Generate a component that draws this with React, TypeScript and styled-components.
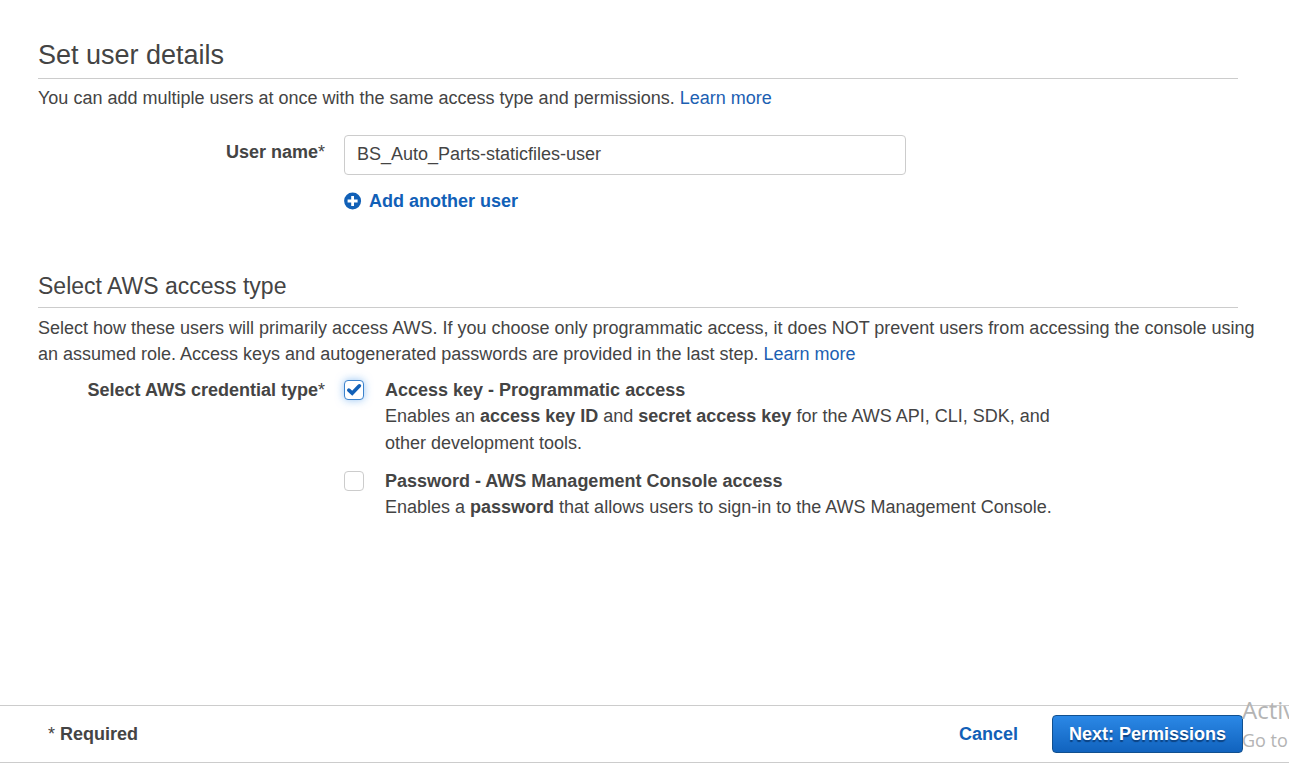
import React, { useState } from "react";
import styled, { createGlobalStyle } from "styled-components";

const GlobalStyle = createGlobalStyle`
  * { box-sizing: border-box; }
  body {
    margin: 0;
    background: #fff;
    color: #444;
    font: 18px/26px "Liberation Sans", Arial, sans-serif;
  }
`;

const Page = styled.div`
  position: relative;
  display: flex;
  flex-direction: column;
  min-height: 100vh;
  overflow: hidden;
`;

const Content = styled.main`
  flex: 1;
  padding: 36px 51px 0 38px;
`;

const Section = styled.section<{ $gap: number }>`
  margin-bottom: ${(p) => p.$gap}px;
`;

const Title = styled.h1`
  margin: 0 0 6px;
  padding-bottom: 3px;
  border-bottom: 1px solid #ccc;
  font-size: 27px;
  line-height: 39px;
  font-weight: 400;
`;

const Subtitle = styled.h2`
  margin: 0 0 7px;
  padding-bottom: 4px;
  border-bottom: 1px solid #ccc;
  font-size: 23px;
  line-height: 34px;
  font-weight: 400;
`;

const Intro = styled.p`
  margin: 0 -24px 0 0;
`;

const Link = styled.a`
  color: #1c60b2;
  text-decoration: none;
`;

const FormRow = styled.div<{ $top: number }>`
  display: grid;
  grid-template-columns: 287px 1fr;
  column-gap: 19px;
  margin-top: ${(p) => p.$top}px;
`;

const FieldLabel = styled.label`
  padding-top: 4px;
  text-align: right;
  font-weight: 700;
`;

const GroupLabel = styled.span`
  text-align: right;
  font-weight: 700;
`;

const Star = styled.span`
  font-weight: 400;
`;

const TextInput = styled.input`
  display: block;
  width: 100%;
  max-width: 562px;
  height: 40px;
  padding: 0 12px 2px;
  border: 1px solid #ccc;
  border-radius: 4px;
  background: #fff;
  color: #444;
  font: inherit;
`;

const AddButton = styled.button`
  display: flex;
  align-items: center;
  gap: 7px;
  margin: 13px 0 0;
  padding: 0;
  border: 0;
  background: none;
  color: #1160b7;
  font: inherit;
  font-weight: 700;
  cursor: pointer;
`;

const Options = styled.div`
  display: flex;
  flex-direction: column;
  gap: 11px;
`;

const Option = styled.div`
  display: flex;
  align-items: flex-start;
  gap: 21px;
`;

const TickBox = styled.span`
  position: relative;
  display: flex;
  flex: none;
  margin-top: 3px;
`;

const Tick = styled.input`
  appearance: none;
  width: 20px;
  height: 20px;
  margin: 0;
  border: 1px solid #ccc;
  border-radius: 4px;
  background: #fff;
  &:checked {
    border-color: #3b82cc;
    box-shadow: 0 0 8px rgba(60, 145, 235, 0.55);
  }
`;

const TickMark = styled.svg`
  position: absolute;
  inset: 0;
  pointer-events: none;
`;

const OptionBody = styled.div`
  max-width: 690px;
`;

const OptionName = styled.label`
  display: block;
  font-weight: 700;
`;

const OptionText = styled.p`
  margin: 0;
  line-height: 27px;
`;

const Footer = styled.footer`
  display: flex;
  align-items: center;
  gap: 34px;
  height: 58px;
  padding: 0 46px 0 48px;
  border-top: 1px solid #ccc;
  border-bottom: 1px solid #ccc;
  margin-bottom: 1px;
  font-weight: 700;
`;

const Required = styled.span`
  margin-right: auto;
`;

const CancelButton = styled.button`
  padding: 0;
  border: 0;
  background: none;
  color: #1160b7;
  font: inherit;
  cursor: pointer;
`;

const NextButton = styled.button`
  height: 38px;
  padding: 0 16px;
  border: 1px solid #11508f;
  border-radius: 4px;
  background: linear-gradient(#2b88e6, #1163be);
  color: #fff;
  font: inherit;
  text-shadow: 0 2px 1px rgba(0, 30, 70, 0.55);
  cursor: pointer;
`;

const Watermark = styled.div`
  position: absolute;
  right: 0;
  bottom: 10px;
  width: 47px;
  overflow: hidden;
  color: #b4b4b4;
  font-family: "Open Sans", "Noto Sans", sans-serif;
  white-space: nowrap;
  pointer-events: none;
`;

const WatermarkTitle = styled.div`
  font-size: 24px;
  line-height: 32px;
`;

const WatermarkText = styled.div`
  font-size: 18px;
  line-height: 28px;
`;

function PlusIcon() {
  return (
    <svg width="18" height="18" viewBox="0 0 18 18" aria-hidden="true">
      <circle cx="8.6" cy="9" r="8.5" fill="#1160b7" />
      <path d="M8.6 4v10M3.6 9h10" stroke="#fff" strokeWidth="2.8" />
    </svg>
  );
}

interface CheckOptionProps {
  id: string;
  name: string;
  initial: boolean;
  children: React.ReactNode;
}

function CheckOption({ id, name, initial, children }: CheckOptionProps) {
  const [checked, setChecked] = useState(initial);
  return (
    <Option>
      <TickBox>
        <Tick
          type="checkbox"
          id={id}
          checked={checked}
          onChange={(e) => setChecked(e.target.checked)}
        />
        {checked && (
          <TickMark width="20" height="20" viewBox="0 0 20 20" aria-hidden="true">
            <path
              d="M4.8 10.2L8.2 13.2L15.4 5.8"
              fill="none"
              stroke="#1160b7"
              strokeWidth="3.6"
              strokeLinecap="round"
            />
          </TickMark>
        )}
      </TickBox>
      <OptionBody>
        <OptionName htmlFor={id}>{name}</OptionName>
        <OptionText>{children}</OptionText>
      </OptionBody>
    </Option>
  );
}

export default function App() {
  const [userName, setUserName] = useState("BS_Auto_Parts-staticfiles-user");
  return (
    <Page>
      <GlobalStyle />
      <Content>
        <Section $gap={55}>
          <Title>Set user details</Title>
          <Intro>
            You can add multiple users at once with the same access type and permissions.{" "}
            <Link href="#users">Learn more</Link>
          </Intro>
          <FormRow $top={24}>
            <FieldLabel htmlFor="user-name">
              User name<Star>*</Star>
            </FieldLabel>
            <div>
              <TextInput
                id="user-name"
                type="text"
                value={userName}
                onChange={(e) => setUserName(e.target.value)}
              />
              <AddButton type="button">
                <PlusIcon />
                Add another user
              </AddButton>
            </div>
          </FormRow>
        </Section>
        <Section $gap={24}>
          <Subtitle>Select AWS access type</Subtitle>
          <Intro>
            Select how these users will primarily access AWS. If you choose only programmatic
            access, it does NOT prevent users from accessing the console using an assumed role.
            Access keys and autogenerated passwords are provided in the last step.{" "}
            <Link href="#access">Learn more</Link>
          </Intro>
          <FormRow $top={10} role="group" aria-labelledby="credential-type">
            <GroupLabel id="credential-type">
              Select AWS credential type<Star>*</Star>
            </GroupLabel>
            <Options>
              <CheckOption id="access-key" name="Access key - Programmatic access" initial>
                Enables an <b>access key ID</b> and <b>secret access key</b> for the AWS API, CLI,
                SDK, and other development tools.
              </CheckOption>
              <CheckOption
                id="password"
                name="Password - AWS Management Console access"
                initial={false}
              >
                Enables a <b>password</b> that allows users to sign-in to the AWS Management
                Console.
              </CheckOption>
            </Options>
          </FormRow>
        </Section>
      </Content>
      <Footer>
        <Required>
          <Star>*</Star> Required
        </Required>
        <CancelButton type="button">Cancel</CancelButton>
        <NextButton type="button">Next: Permissions</NextButton>
      </Footer>
      <Watermark>
        <WatermarkTitle>Activ</WatermarkTitle>
        <WatermarkText>Go to</WatermarkText>
      </Watermark>
    </Page>
  );
}
